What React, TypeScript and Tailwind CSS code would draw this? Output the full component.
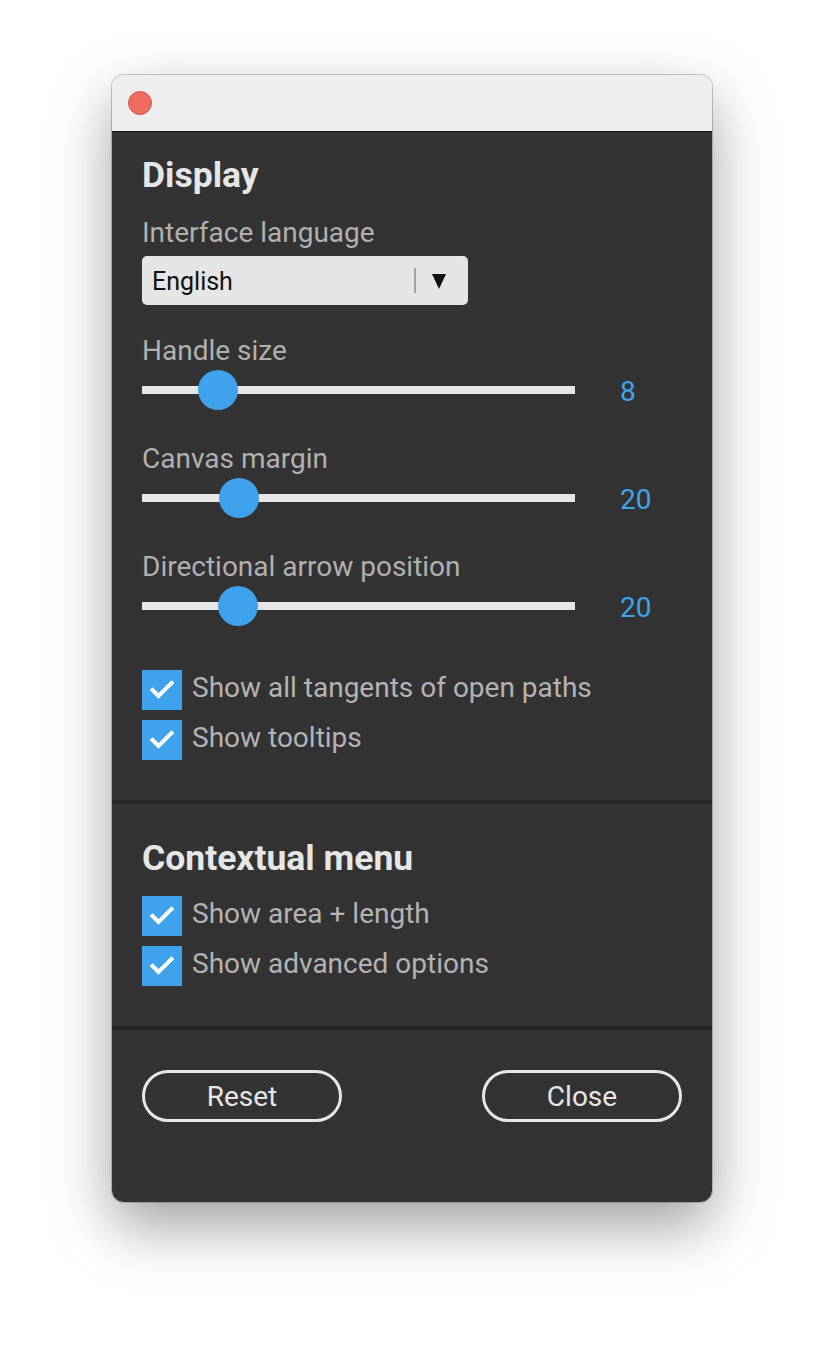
import React from "react";

function Check() {
  return (
    <div className="w-[40px] h-[40px] bg-[#3ea3ec] flex items-center justify-center shrink-0">
      <svg width="40" height="40" viewBox="0 0 40 40">
        <polyline points="10.5,20 16.5,26 29.5,13" fill="none" stroke="#ffffff" strokeWidth="4" strokeLinecap="square" strokeLinejoin="miter" />
      </svg>
    </div>
  );
}

function CheckRow({ label, className = "" }: { label: string; className?: string }) {
  return (
    <div className={"flex items-center h-[40px] " + className}>
      <Check />
      <span className="ml-[10px] pb-[4px] text-[28px] leading-none text-[#b3b3b3]">{label}</span>
    </div>
  );
}

function Slider({ label, thumb, value, className = "" }: { label: string; thumb: number; value: string; className?: string }) {
  return (
    <div className={className}>
      <div className="h-[32px] pt-[2px] flex items-center text-[28px] leading-none text-[#b0b0b0]">{label}</div>
      <div className="mt-[4px] h-[40px] flex items-center">
        <div className="relative w-[433px] h-[8px] bg-[#e6e6e6]">
          <div
            className="absolute top-1/2 w-[40px] h-[40px] -mt-[20px] -ml-[20px] rounded-full bg-[#3ea3ec]"
            style={{ left: thumb }}
          />
        </div>
        <div className="ml-[45px] pt-[4px] text-[28px] leading-none text-[#3ea3ec]">{value}</div>
      </div>
    </div>
  );
}

export default function App() {
  return (
    <div className="min-h-[1350px] w-[824px] bg-white pt-[75px] pl-[112px] font-[Roboto,sans-serif]">
      <div className="w-[600px] h-[1127px] rounded-[12px] overflow-hidden flex flex-col shadow-[0_24px_60px_rgba(0,0,0,0.38),0_0_0_1px_rgba(0,0,0,0.2)]">
        <div className="h-[57px] shrink-0 bg-[#eeeeee] border-b border-[#161616] flex items-center pl-[16px]">
          <div className="w-[24px] h-[24px] rounded-full bg-[#ee6b5f] border border-[#d4574c]" />
        </div>
        <div className="grow bg-[#333333] flex flex-col">
          <div className="px-[30px] pt-[23px] pb-[40px]">
            <div className="h-[40px] pt-[2px] flex items-center text-[35.5px] font-bold leading-none text-[#e6e6e6]">Display</div>
            <div className="mt-[21px] h-[32px] pt-[2px] flex items-center text-[28px] leading-none text-[#b0b0b0]">Interface language</div>
            <div className="mt-[8px] w-[326px] h-[49px] rounded-[5px] bg-[#e5e5e5] flex items-center">
              <span className="pl-[10px] pt-[2px] w-[272px] text-[25px] leading-none text-[#111111]">English</span>
              <div className="w-[2px] h-[25px] bg-[#a3a3a3]" />
              <svg width="14" height="15" viewBox="0 0 14 15" className="ml-[16px] mt-[2px]">
                <polygon points="0,0 14,0 7,15" fill="#111111" />
              </svg>
            </div>
            <Slider className="mt-[29px]" label="Handle size" thumb={76} value="8" />
            <Slider className="mt-[32px]" label="Canvas margin" thumb={97} value="20" />
            <Slider className="mt-[32px]" label="Directional arrow position" thumb={96} value="20" />
            <CheckRow className="mt-[44px]" label="Show all tangents of open paths" />
            <CheckRow className="mt-[10px]" label="Show tooltips" />
          </div>
          <div className="h-[4px] bg-[#262626] shrink-0" />
          <div className="px-[30px] pt-[34px] pb-[40px]">
            <div className="h-[40px] pt-[2px] flex items-center text-[35.5px] font-bold leading-none text-[#e6e6e6]">Contextual menu</div>
            <CheckRow className="mt-[18px]" label="Show area + length" />
            <CheckRow className="mt-[10px]" label="Show advanced options" />
          </div>
          <div className="h-[4px] bg-[#262626] shrink-0" />
          <div className="px-[30px] pt-[40px] flex justify-between">
            <button className="w-[200px] h-[52px] pt-[2px] rounded-full border-[3px] border-[#e6e6e6] text-[28px] leading-none text-[#e6e6e6]">Reset</button>
            <button className="w-[200px] h-[52px] pt-[2px] rounded-full border-[3px] border-[#e6e6e6] text-[28px] leading-none text-[#e6e6e6]">Close</button>
          </div>
        </div>
      </div>
    </div>
  );
}
